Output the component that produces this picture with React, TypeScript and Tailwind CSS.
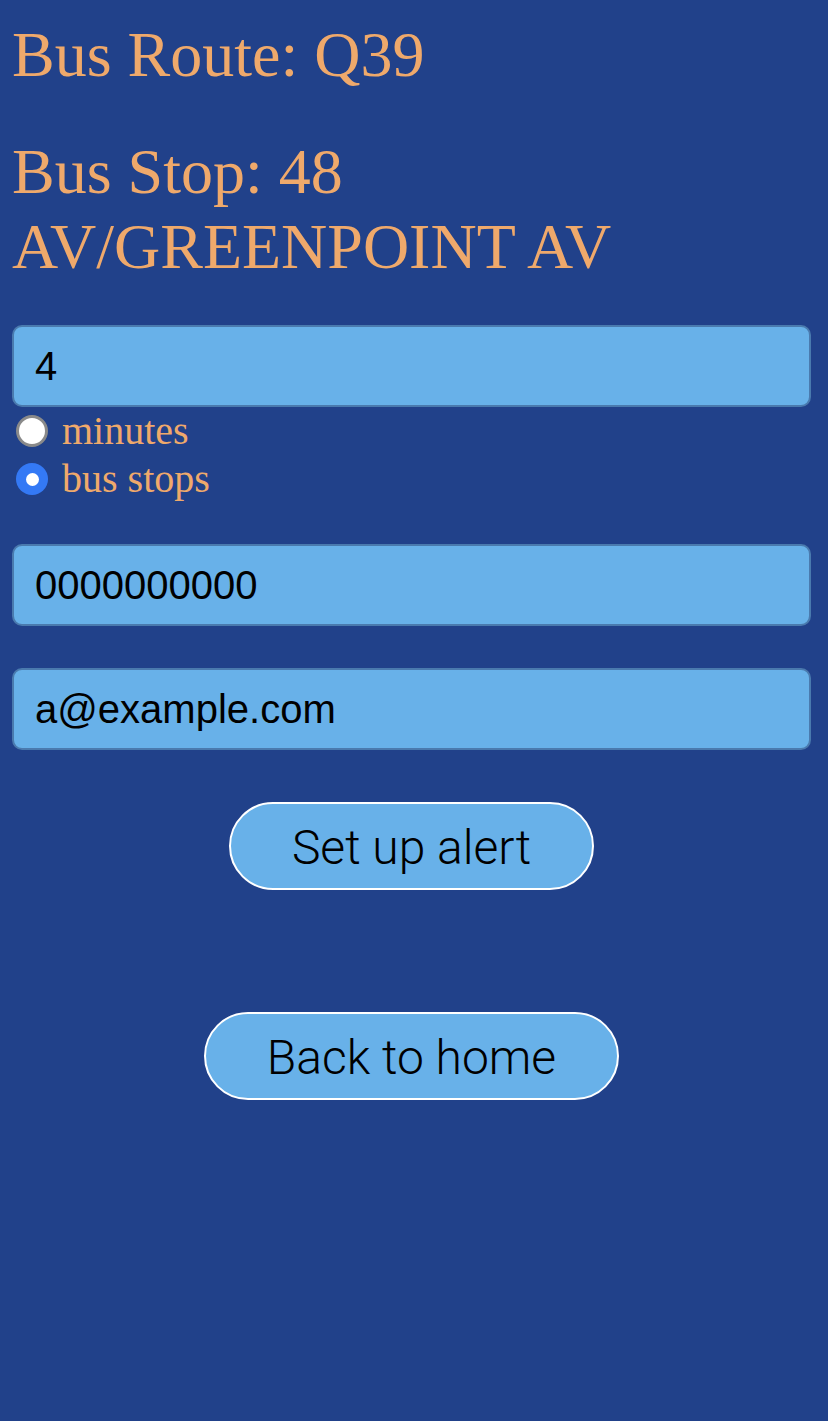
import React from "react";

const serif = "font-['Liberation_Serif','Times_New_Roman',serif]";
const sans = "font-['Liberation_Sans',Arial,sans-serif]";

function Field({ value }: { value: string }) {
  return (
    <div
      className={`h-[82px] w-full flex items-center rounded-[10px] border-2 border-[#4a7aae] bg-[#68b1e9] px-[21px] text-[40px] text-black ${sans}`}
    >
      {value}
    </div>
  );
}

function Radio({ checked, label }: { checked: boolean; label: string }) {
  return (
    <div className="flex items-center h-[48px]">
      {checked ? (
        <span className="ml-1 w-8 h-8 rounded-full bg-[#3479f5] flex items-center justify-center">
          <span className="w-[13px] h-[13px] rounded-full bg-white" />
        </span>
      ) : (
        <span className="ml-1 w-8 h-8 rounded-full bg-white border-[3px] border-[#8a8a8a]" />
      )}
      <span className={`ml-[14px] text-[40px] leading-[48px] text-[#efa96b] ${serif}`}>{label}</span>
    </div>
  );
}

function PillButton({ label }: { label: string }) {
  return (
    <button
      className="h-[88px] rounded-full border-2 border-white bg-[#68b1e9] px-[61px] pt-[4px] text-[48px] font-light text-black font-['Roboto','Liberation_Sans',sans-serif]"
    >
      {label}
    </button>
  );
}

export default function App() {
  return (
    <div className="min-h-screen w-full bg-[#21418a] pl-3 pr-[17px] pt-[17px]">
      <h1 className={`text-[64px] leading-[75px] font-normal text-[#efa96b] ${serif}`}>Bus Route: Q39</h1>
      <h2 className={`mt-[42px] text-[64px] leading-[75px] font-normal text-[#efa96b] ${serif}`}>
        Bus Stop: 48 AV/GREENPOINT AV
      </h2>
      <div className="mt-[41px]">
        <Field value="4" />
        <Radio checked={false} label="minutes" />
        <Radio checked={true} label="bus stops" />
      </div>
      <div className="mt-[41px]">
        <Field value="0000000000" />
      </div>
      <div className="mt-[42px]">
        <Field value="a@example.com" />
      </div>
      <div className="mt-[52px] flex justify-center">
        <PillButton label="Set up alert" />
      </div>
      <div className="mt-[122px] flex justify-center">
        <PillButton label="Back to home" />
      </div>
    </div>
  );
}
